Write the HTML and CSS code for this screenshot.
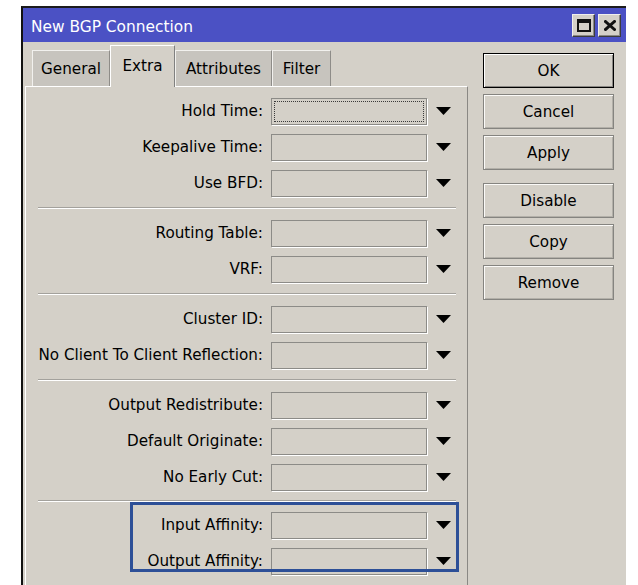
FILE: index.html
```html
<!DOCTYPE html>
<html>
<head>
<meta charset="utf-8">
<title>New BGP Connection</title>
<link rel="stylesheet" href="styles.css">
</head>
<body>
<div class="window">
  <div class="titlebar">
    <span class="title">New BGP Connection</span>
    <div class="ctrls">
      <span class="cbtn">
        <svg width="14" height="13" viewBox="0 0 14 13"><rect x="1" y="1" width="12" height="11" fill="none" stroke="#111" stroke-width="2"/><rect x="0" y="0" width="14" height="4" fill="#111"/></svg>
      </span>
      <span class="cbtn">
        <svg width="12" height="11" viewBox="0 0 12 11"><path d="M1.5 1.5 L10.5 9.5 M10.5 1.5 L1.5 9.5" stroke="#111" stroke-width="3" stroke-linecap="square"/></svg>
      </span>
    </div>
  </div>
  <div class="body">
    <div class="main">
      <div class="tabs">
        <div class="tab t-general">General</div>
        <div class="tab t-extra active">Extra</div>
        <div class="tab t-attr">Attributes</div>
        <div class="tab t-filter">Filter</div>
      </div>
      <div class="panel">
        <div class="group">
          <div class="row"><span class="label">Hold Time:</span><span class="field focus"></span><span class="drop"><svg width="15" height="8" viewBox="0 0 15 8"><path d="M0 0H15L7.5 8Z"/></svg></span></div>
          <div class="row"><span class="label">Keepalive Time:</span><span class="field"></span><span class="drop"><svg width="15" height="8" viewBox="0 0 15 8"><path d="M0 0H15L7.5 8Z"/></svg></span></div>
          <div class="row"><span class="label">Use BFD:</span><span class="field"></span><span class="drop"><svg width="15" height="8" viewBox="0 0 15 8"><path d="M0 0H15L7.5 8Z"/></svg></span></div>
        </div>
        <div class="sep"></div>
        <div class="group">
          <div class="row"><span class="label">Routing Table:</span><span class="field"></span><span class="drop"><svg width="15" height="8" viewBox="0 0 15 8"><path d="M0 0H15L7.5 8Z"/></svg></span></div>
          <div class="row"><span class="label">VRF:</span><span class="field"></span><span class="drop"><svg width="15" height="8" viewBox="0 0 15 8"><path d="M0 0H15L7.5 8Z"/></svg></span></div>
        </div>
        <div class="sep"></div>
        <div class="group">
          <div class="row"><span class="label">Cluster ID:</span><span class="field"></span><span class="drop"><svg width="15" height="8" viewBox="0 0 15 8"><path d="M0 0H15L7.5 8Z"/></svg></span></div>
          <div class="row"><span class="label">No Client To Client Reflection:</span><span class="field"></span><span class="drop"><svg width="15" height="8" viewBox="0 0 15 8"><path d="M0 0H15L7.5 8Z"/></svg></span></div>
        </div>
        <div class="sep"></div>
        <div class="group">
          <div class="row"><span class="label">Output Redistribute:</span><span class="field"></span><span class="drop"><svg width="15" height="8" viewBox="0 0 15 8"><path d="M0 0H15L7.5 8Z"/></svg></span></div>
          <div class="row"><span class="label">Default Originate:</span><span class="field"></span><span class="drop"><svg width="15" height="8" viewBox="0 0 15 8"><path d="M0 0H15L7.5 8Z"/></svg></span></div>
          <div class="row"><span class="label">No Early Cut:</span><span class="field"></span><span class="drop"><svg width="15" height="8" viewBox="0 0 15 8"><path d="M0 0H15L7.5 8Z"/></svg></span></div>
        </div>
        <div class="sep sep-last"></div>
        <div class="group">
          <div class="row"><span class="label">Input Affinity:</span><span class="field"></span><span class="drop"><svg width="15" height="8" viewBox="0 0 15 8"><path d="M0 0H15L7.5 8Z"/></svg></span></div>
          <div class="row"><span class="label">Output Affinity:</span><span class="field"></span><span class="drop"><svg width="15" height="8" viewBox="0 0 15 8"><path d="M0 0H15L7.5 8Z"/></svg></span></div>
          <div class="highlight"></div>
        </div>
      </div>
    </div>
    <div class="actions">
      <div class="btn default">OK</div>
      <div class="btn">Cancel</div>
      <div class="btn">Apply</div>
      <div class="btn spaced">Disable</div>
      <div class="btn">Copy</div>
      <div class="btn">Remove</div>
    </div>
  </div>
</div>
</body>
</html>
```

FILE: styles.css
```css
* { box-sizing: border-box; }

html, body {
  margin: 0;
  padding: 0;
}

body {
  background: #fff;
  font-family: "DejaVu Sans", "Liberation Sans", sans-serif;
  font-size: 15.2px;
  color: #000;
  height: 585px;
  overflow: hidden;
}

/* dialog frame */
.window {
  margin: 6px 0 0 21px;
  width: 605px;
  height: 579px;
  border-top: 2px solid #1c1c1c;
  border-left: 2px solid #111;
  background: #d4d0c8;
  display: flex;
  flex-direction: column;
}

.titlebar {
  flex: none;
  height: 34px;
  background: #4b51c4;
  display: flex;
  align-items: center;
  padding: 0 5px 0 8px;
}

.title {
  flex: 1;
  color: #fff;
  font-size: 15.4px;
  padding-top: 3px;
}

.ctrls {
  display: flex;
  gap: 3px;
}

.cbtn {
  width: 23px;
  height: 23px;
  background: #d4d0c8;
  border: 1px solid;
  border-color: #f0efec #3c3c3c #3c3c3c #f0efec;
  box-shadow: inset -1px -1px 0 #8a8884;
  display: flex;
  align-items: center;
  justify-content: center;
}

.body {
  flex: 1;
  min-height: 0;
  display: flex;
}

/* tabbed area */
.main {
  width: 445px;
  padding-left: 2px;
  display: flex;
  flex-direction: column;
}

.tabs {
  flex: none;
  height: 44px;
  display: flex;
  align-items: flex-end;
  padding-left: 7px;
}

.tab {
  height: 36px;
  background: #c7c4be;
  border-top: 1px solid #f2f1ee;
  border-left: 1px solid #f2f1ee;
  border-right: 1px solid #8e8c88;
  display: flex;
  align-items: center;
  justify-content: center;
  padding-top: 1px;
}

.tab.active {
  height: 42px;
  margin-bottom: -1px;
  background: #d4d0c8;
  border-top-color: #fff;
  border-left-color: #fff;
  border-right-color: #808080;
  position: relative;
  z-index: 1;
  padding-top: 0;
  padding-bottom: 2px;
}

.t-general { width: 78px; }
.t-extra { width: 65px; }
.t-attr { width: 97px; }
.t-filter { width: 59px; }

.panel {
  flex: 1;
  border-top: 1px solid #fff;
  border-left: 1px solid #fff;
  border-right: 1px solid #8a8884;
  padding-top: 6px;
}

.group {
  position: relative;
}

.row {
  height: 36px;
  display: flex;
  align-items: center;
}

.label {
  width: 237px;
  text-align: right;
  white-space: nowrap;
}

.field {
  margin-left: 8px;
  width: 156px;
  height: 27px;
  border: 1px solid #8c8b87;
  box-shadow: 1px 1px 0 #fff;
  background: #d4d0c8;
}

.field.focus {
  outline: 1px dotted #3a3a3a;
  outline-offset: -4px;
}

.drop {
  margin-left: 9px;
  display: flex;
  align-items: center;
}

.drop svg { fill: #000; }

.sep {
  height: 2px;
  margin: 6px 11px 6px 12px;
  border-top: 1px solid #a3a19c;
  border-bottom: 1px solid #fff;
}

.sep-last {
  margin-top: 5px;
  margin-bottom: 5px;
}

/* annotation frame around the affinity fields */
.highlight {
  position: absolute;
  left: 104px;
  top: -5px;
  width: 329px;
  height: 70px;
  border: 3px solid #2d4f97;
  pointer-events: none;
}

/* command buttons */
.actions {
  padding: 11px 0 0 15px;
  display: flex;
  flex-direction: column;
  gap: 6px;
}

.btn {
  width: 131px;
  height: 35px;
  border: 1px solid #858480;
  box-shadow: inset 1px 1px 0 #fbfaf8, inset -1px -1px 0 #b3b0a9;
  display: flex;
  align-items: center;
  justify-content: center;
}

.btn.default {
  border-color: #000;
  box-shadow: inset 1px 1px 0 #fff, inset -1px -1px 0 #8a8884;
}

.btn.spaced {
  margin-top: 7px;
}
```
